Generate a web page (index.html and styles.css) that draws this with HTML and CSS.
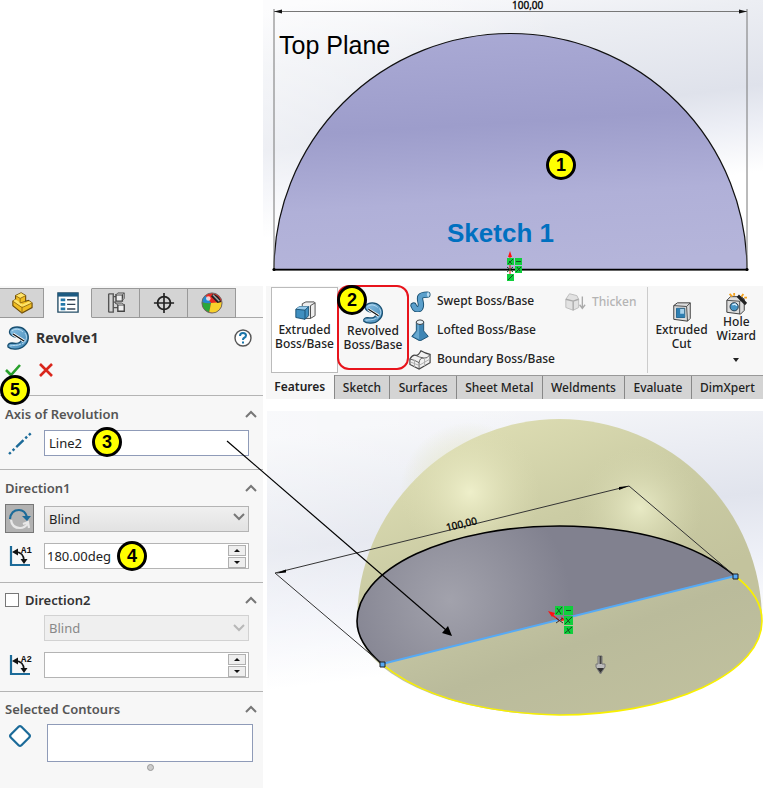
FILE: index.html
```html
<!DOCTYPE html>
<html lang="en">
<head>
<meta charset="utf-8">
<title>Revolve1</title>
<link rel="stylesheet" href="styles.css">
</head>
<body>
<svg class="defs" width="0" height="0" aria-hidden="true">
  <defs>
    <linearGradient id="steel" x1="0" y1="0" x2="1" y2="1"><stop offset="0" stop-color="#8fc4e6"/><stop offset="1" stop-color="#3f86b5"/></linearGradient>
    <symbol id="revolve" viewBox="0 0 24 24">
      <path d="M4 4C7 0 15 0 19 4c5 5 4 12-1 16-4 4-13 4-16 1-1-3 2-4 4-4 5 1 9 0 9-3 0-2-1-3-3-3-5 1-10-3-8-7Z" fill="url(#steel)" stroke="#174e70" stroke-width="1.300"/>
      <path d="M6 5c3-3 8-2 11 1M19 7c3 4 1 9-3 11M4 20c3-1 8 0 11-2" fill="none" stroke="#b9dcf1" stroke-width="1"/>
      <path d="M7 8l11 7" stroke="#fff" stroke-width="3"/><path d="M7 8l11 7" stroke="#111" stroke-width="1.400"/>
    </symbol>
    <symbol id="chevron" viewBox="0 0 12 8"><path d="M1 7l5-5 5 5" fill="none" stroke="#777" stroke-width="2"/></symbol>
    <symbol id="angle" viewBox="0 0 24 24">
      <path d="M3 2v19h19" fill="none" stroke="#1c6b99" stroke-width="2.200"/>
      <path d="M7 8q9 0 9 9" fill="none" stroke="#111" stroke-width="1.600"/>
      <path d="M4 8l6-3.500v7zM16 20l-3.500-5h7z" fill="#111"/>
    </symbol>
  </defs>
</svg>

<main class="page">
  <section class="sketch" aria-label="Sketch">
    <svg viewBox="263 0 500 284" role="img">
      <defs>
        <linearGradient id="sky1" gradientUnits="userSpaceOnUse" x1="480" y1="-20" x2="510" y2="205">
          <stop offset="0" stop-color="#fafafc"/><stop offset=".25" stop-color="#eceef3"/><stop offset=".62" stop-color="#dfe2eb"/><stop offset=".78" stop-color="#eceef5"/><stop offset="1" stop-color="#fff"/>
        </linearGradient>
        <linearGradient id="glow1" x1="0" y1="0" x2="1" y2="0"><stop offset="0" stop-color="#fff" stop-opacity=".45"/><stop offset=".6" stop-color="#fff" stop-opacity="0"/></linearGradient>
        <linearGradient id="disc" gradientUnits="userSpaceOnUse" x1="500" y1="33" x2="515" y2="269">
          <stop offset="0" stop-color="#a9a9d4"/><stop offset=".38" stop-color="#9d9dcb"/><stop offset=".7" stop-color="#b0b0d8"/><stop offset="1" stop-color="#b5b5da"/>
        </linearGradient>
      </defs>
      <path d="M263 0h500v284H263z" fill="url(#sky1)"/>
      <path d="M263 0h500v284H263z" fill="url(#glow1)"/>
      <path d="M274 270A236.500 236.500 0 0 1 747 270Z" fill="url(#disc)" stroke="#111" stroke-width="1.200"/>
      <path d="M274 9v260M747 9v260M274 11.500h473" fill="none" stroke="#777" stroke-width="1"/>
      <path d="M274 11.500l8-2v4zM747 11.500l-8-2v4z" fill="#111"/>
      <path d="M274 269.500h473" stroke="#000" stroke-width="1.400"/><circle cx="274" cy="269.500" r="1.600"/><circle cx="747" cy="269.500" r="1.600"/>
      <text class="dimension" x="512" y="9">100,00</text>
      <text class="plane" x="279" y="54">Top Plane</text>
      <text class="name" x="447" y="242">Sketch 1</text>
      <path d="M510 275v-20" stroke="#e11" stroke-width="1"/><path d="M510 251l2 6h-4zM522 270l-7-2v4z" fill="#f11"/>
      <path d="M507 258h7v7h-7zM515 258h7v7h-7zM515 266h7v7h-7zM507 274h7v7h-7z" fill="#10cf3c"/>
      <path d="M508 264l5-5M509 261l3 3M516 261.500h5M516 272l5-5M517 267l3 4M508 280l5-5M507 267l6 5M507 272l6-5" stroke="#124d20" stroke-width="1"/>
      <circle cx="561" cy="165" r="13.500" fill="#ff0" stroke="#000" stroke-width="3"/>
      <text class="mark" x="561" y="171">1</text>
    </svg>
  </section>

  <aside class="panel">
    <nav class="panel-tabs" aria-label="Manager tabs">
      <button aria-label="Feature tree"><svg viewBox="0 0 24 24"><path d="M2 10l3-2V4l6-3 5 3v6l3-1 4 3v5l-11 6L2 15z" fill="#f0bd22" stroke="#6b4b08" stroke-width="1.200"/><path d="M5 4l5 3 6-3-5-3zM2 10l3-2 8 6-2 2zM12 14l8-4 3 2-10 5z" fill="#ffe468"/><path d="M5 4l5 3v5M10 7l6-3M2 10l10 7 11-5M12 17v6M10 12l6-2" fill="none" stroke="#946a0d"/></svg></button>
      <button class="current" aria-label="Properties"><svg viewBox="0 0 24 24"><path d="M1 1h22v21H1z" fill="#fff" stroke="#254e67" stroke-width="1.500"/><path d="M1 1h22v4H1z" fill="#1d5b82"/><path d="M4 7h5v3H4zM4 12h5v3H4zM4 17h5v3H4z" fill="#2478a9"/><path d="M11 8.500h9M11 13.500h9M11 18.500h9" stroke="#345" stroke-width="1.500"/></svg></button>
      <button aria-label="Configurations"><svg viewBox="0 0 24 24"><path d="M4 2h5v20H4M4 2v20M9 5h6M9 17h6M9 11h3" fill="none" stroke="#555" stroke-width="1.500"/><path d="M12 3h7v7h-7zM14 14h7v7h-7z" fill="#eee" stroke="#444" stroke-width="1.500"/><path d="M12 3l2-2h7l-2 2M21 1v6l-2 2M14 14l-3-2h7l3 2" fill="#bbb" stroke="#555"/></svg></button>
      <button aria-label="DimXpert manager"><svg viewBox="0 0 24 24"><circle cx="12" cy="12" r="7" fill="none" stroke="#222" stroke-width="2"/><path d="M12 1v22M1 12h22" stroke="#222" stroke-width="1.800"/></svg></button>
      <button aria-label="Appearances"><svg viewBox="0 0 24 24"><circle cx="12" cy="12" r="11" fill="#e52a24"/><path d="M1 11q5 2 10 1l-2 10Q1 20 1 11z" fill="#2aa83a"/><path d="M1 11Q1 6 5 4l6 8Q6 13 1 11z" fill="#238ad0"/><path d="M11 12l12-1q0 10-9 12l-5-1z" fill="#f8d12b"/><path d="M13 2q7 2 9 9l-4 1-7-7z" fill="#222"/><path d="M13 3l7 7" stroke="#aaa" stroke-width="1.500"/><circle cx="12" cy="12" r="11" fill="none" stroke="#666"/><circle cx="8" cy="7" r="2.500" fill="#fff" opacity=".75"/></svg></button>
    </nav>
    <header class="title">
      <svg class="feature-icon"><use href="#revolve"/></svg>
      <h1>Revolve1</h1>
      <button class="plain" aria-label="Help"><svg width="18" height="18" viewBox="0 0 18 18"><circle cx="9" cy="9" r="8" fill="#fff" stroke="#555" stroke-width="1.400"/><path d="M6 7q0-3 3-3t3 2.500q0 1.500-2 2.500-1 .5-1 2" fill="none" stroke="#1b76aa" stroke-width="2"/><path d="M8 12.500h2v2H8z" fill="#1b76aa"/></svg></button>
    </header>
    <div class="actions">
      <button class="plain" aria-label="OK"><svg width="18" height="16" viewBox="0 0 18 16"><path d="M2 8l5 5L16 3" fill="none" stroke="#28a02b" stroke-width="2.600"/></svg></button>
      <button class="plain" aria-label="Cancel"><svg width="14" height="14" viewBox="0 0 14 14"><path d="M1 1l12 12M13 1L1 13" stroke="#d9261c" stroke-width="2.600"/></svg></button>
      <span class="badge badge-ok">5</span>
    </div>

    <section class="group">
      <h2><label for="axis">Axis of Revolution</label><svg><use href="#chevron"/></svg></h2>
      <div class="row">
        <svg class="row-icon" viewBox="0 0 24 24"><path d="M1 23L23 2" stroke="#1c6b99" stroke-width="2.400" stroke-dasharray="2.500 2.500 2.500 2.500 10 2.500 2.500 2.500 2.500 2.500"/></svg>
        <input id="axis" class="field picked" value="Line2">
        <span class="badge badge-axis">3</span>
        <svg class="pointer" width="228" height="198" viewBox="0 0 228 198"><path d="M1 1L220 190" stroke="#000" stroke-width="1.200"/><path d="M226 196l-10-3 6-7z"/></svg>
      </div>
    </section>

    <section class="group">
      <h2><label for="type1">Direction1</label><svg><use href="#chevron"/></svg></h2>
      <div class="row">
        <button class="reverse" aria-label="Reverse direction"><svg viewBox="0 0 24 24"><path d="M3 13q1 8 9 8 5 0 8-5M15 17l5-2 1 6" fill="none" stroke="#e8e8e8" stroke-width="2.200"/><path d="M2 12Q3 3 11 3q6 0 8 7" fill="none" stroke="#1c6b99" stroke-width="2.200"/><path d="M14 9h9l-4 5z" fill="#1c6b99"/></svg></button>
        <select id="type1" class="field"><option>Blind</option></select>
        <svg class="arrow"><use href="#chevron"/></svg>
      </div>
      <div class="row">
        <svg class="row-icon" viewBox="0 0 24 24"><use href="#angle"/><text x="13" y="9">A1</text></svg>
        <input class="field tight" aria-label="Direction 1 angle" value="180.00deg">
        <span class="spin"><button aria-label="Increase"></button><button aria-label="Decrease"></button></span>
        <span class="badge badge-angle">4</span>
      </div>
    </section>

    <section class="group compact">
      <h2 class="strong"><input type="checkbox" id="dir2"><label for="dir2">Direction2</label><svg><use href="#chevron"/></svg></h2>
      <div class="row">
        <span></span>
        <select class="field" aria-label="Direction 2 type" disabled><option>Blind</option></select>
        <svg class="arrow faded"><use href="#chevron"/></svg>
      </div>
      <div class="row">
        <svg class="row-icon" viewBox="0 0 24 24"><use href="#angle"/><text x="13" y="9">A2</text></svg>
        <input class="field tight" aria-label="Direction 2 angle">
        <span class="spin"><button aria-label="Increase"></button><button aria-label="Decrease"></button></span>
      </div>
    </section>

    <section class="group compact">
      <h2><label for="contours">Selected Contours</label><svg><use href="#chevron"/></svg></h2>
      <div class="row contours">
        <svg class="row-icon" viewBox="0 0 24 24"><rect x="4.500" y="4.500" width="15" height="15" rx="2" transform="rotate(45 12 12)" fill="#fff" stroke="#1c6b99" stroke-width="2.200"/></svg>
        <textarea id="contours" class="field picked"></textarea>
      </div>
      <div class="grip"></div>
    </section>
  </aside>

  <div class="work">
    <section class="ribbon">
      <div class="tools">
        <button class="tool boxed"><svg viewBox="0 0 24 24"><path d="M9 3l4-2h9l1 1v14l-5 3H9z" fill="#eee" stroke="#444"/><path d="M18 5l5-3M18 5v14" stroke="#444"/><path d="M2 9l4-3h10v10l-4 4-10-2z" fill="#3f8fc0" stroke="#174e70"/><path d="M2 9l4-3h10l-4 4z" fill="#9bcbea"/><path d="M2 9l10 1v10M12 10l4-4" fill="none" stroke="#174e70"/></svg><span>Extruded<br>Boss/Base</span></button>
        <button class="tool chosen"><svg><use href="#revolve"/></svg><span>Revolved<br>Boss/Base</span><b class="badge badge-tool">2</b></button>
        <div class="list">
          <button><svg viewBox="0 0 24 24"><path d="M5 17c2 6 8 5 8-1 0-5-5-11 7-11" fill="none" stroke="#174e70" stroke-width="7" stroke-linecap="round"/><path d="M5 17c2 6 8 5 8-1 0-5-5-11 7-11" fill="none" stroke="#5b9fcb" stroke-width="5" stroke-linecap="round"/><ellipse cx="21" cy="5" rx="1.500" ry="2.500" fill="#b9dcf1"/></svg>Swept Boss/Base</button>
          <button><svg viewBox="0 0 24 24"><path d="M8 3v10L3 19l9 5 9-5-5-6V3z" fill="#3f86b5" stroke="#174e70"/><path d="M9 5v8l-4 6 6 3V5z" fill="#68a9d0"/><ellipse cx="12" cy="3.500" rx="4" ry="2.500" fill="#e4f0f7" stroke="#333"/></svg>Lofted Boss/Base</button>
          <button><svg viewBox="0 0 24 24"><path d="M1 12q3-5 6-4t6-5q5 3 10 4v9l-12 7-10-5z" fill="#f1f1f1" stroke="#444" stroke-width="1.300"/><path d="M1 12q5 1 10 4 1-6 5-5t7-4M11 16v7M7 8q4 2 9 3" fill="none" stroke="#555"/><path d="M1 15l10 4 12-7M6 13v8M17 11v9" fill="none" stroke="#aaa"/></svg>Boundary Boss/Base</button>
        </div>
        <button class="thicken" disabled><svg viewBox="0 0 24 24"><path d="M2 9l4-6 8 2 2 4v9l-6 3-8-3z" fill="#e2e2e2" stroke="#bbb"/><path d="M2 9l8 2 6-2M10 11v10M20 6v12M17 15l3 4 3-4" fill="none" stroke="#aaa" stroke-width="1.500"/></svg>Thicken</button>
        <button class="tool cut"><svg viewBox="0 0 24 24"><path d="M3 5l4-3h14v17l-3 3-15-2z" fill="#ddd" stroke="#333"/><path d="M3 5l14 1 4-4M17 6l1 16" fill="none" stroke="#444"/><path d="M6 8h9v10H6z" fill="#a8d2ec" stroke="#174e70"/><path d="M6 18V8h4v6h5v4z" fill="#2f7fb2"/></svg><span>Extruded<br>Cut</span></button>
        <button class="tool hole"><svg viewBox="0 0 24 24"><path d="M2 8l4-4h12l3 3v12l-4 4-15-2z" fill="#ddd" stroke="#333"/><path d="M2 8l14 1v14M16 9l5-3" fill="none" stroke="#444"/><circle cx="10" cy="15" r="4.500" fill="#4695c6" stroke="#234"/><path d="M8 13l3-1 2 2" fill="none" stroke="#d7efff" stroke-width="1.500"/><path d="M14 3l9 9" stroke="#222" stroke-width="3.500"/><path d="M5 1l3 3M10 0v3M20 1l-2 3M21 5h3" stroke="#f3a11c" stroke-width="2"/></svg><span>Hole<br>Wizard</span><i></i></button>
      </div>
      <nav class="ribbon-tabs" aria-label="Ribbon tabs">
        <button class="current">Features</button><button>Sketch</button><button>Surfaces</button><button>Sheet Metal</button><button>Weldments</button><button>Evaluate</button><button>DimXpert</button>
      </nav>
    </section>

    <section class="model" aria-label="Model preview">
      <svg viewBox="267 411 496 312" role="img">
        <defs>
          <linearGradient id="sky2" gradientUnits="userSpaceOnUse" x1="490" y1="411" x2="520" y2="660"><stop offset="0" stop-color="#f5f6f9"/><stop offset=".45" stop-color="#e1e4ed"/><stop offset=".72" stop-color="#eff1f8"/><stop offset="1" stop-color="#fff"/></linearGradient>
          <linearGradient id="glow2" x1="0" y1="0" x2="1" y2="0"><stop offset="0" stop-color="#fff" stop-opacity=".3"/><stop offset=".6" stop-color="#fff" stop-opacity="0"/></linearGradient>
          <linearGradient id="dome" gradientUnits="userSpaceOnUse" x1="510" y1="419" x2="590" y2="620"><stop offset="0" stop-color="#dcdcb2"/><stop offset=".5" stop-color="#cbcca4"/><stop offset="1" stop-color="#c3c39d"/></linearGradient>
          <radialGradient id="shineA" gradientUnits="userSpaceOnUse" cx="470" cy="492" r="70"><stop offset="0" stop-color="#eeefca"/><stop offset="1" stop-color="#dcdcb2" stop-opacity="0"/></radialGradient>
          <radialGradient id="shineB" gradientUnits="userSpaceOnUse" cx="640" cy="508" r="62"><stop offset="0" stop-color="#e8eac5"/><stop offset="1" stop-color="#d4d5ad" stop-opacity="0"/></radialGradient>
          <radialGradient id="face" gradientUnits="userSpaceOnUse" cx="450" cy="600" r="120"><stop offset="0" stop-color="#a2a2ac"/><stop offset=".55" stop-color="#90909c"/><stop offset="1" stop-color="#81818f"/></radialGradient>
          <linearGradient id="base" x1="0" y1="0" x2="1" y2="1"><stop offset="0" stop-color="#cecfaa"/><stop offset=".5" stop-color="#babb9b"/><stop offset="1" stop-color="#c2c29f"/></linearGradient>
        </defs>
        <path d="M267 411h496v312H267z" fill="url(#sky2)"/><path d="M267 411h496v312H267z" fill="url(#glow2)"/>
        <path d="M357 621A202.500 202 0 0 1 762 621A202.500 94 0 0 1 357 621Z" fill="url(#dome)"/>
        <circle cx="470" cy="492" r="70" fill="url(#shineA)"/>
        <circle cx="640" cy="508" r="62" fill="url(#shineB)"/>
        <path d="M735 576Q762 596 762 621A202.500 94 0 0 1 559.500 715Q440 712 382 664Z" fill="url(#base)"/>
        <path d="M382 664Q357 643 357 621A202.500 95 0 0 1 559.500 526Q676 527 735 576Z" fill="url(#face)"/>
        <path d="M735 576Q762 596 762 621A202.500 94 0 0 1 559.500 715Q440 712 382 664" fill="none" stroke="#f8f000" stroke-width="1.600"/>
        <path d="M382 664Q357 643 357 621A202.500 95 0 0 1 559.500 526Q676 527 735 576" fill="none" stroke="#000" stroke-width="1.600"/>
        <path d="M382 664L735 576" stroke="#56aaf5" stroke-width="2"/>
        <path d="M382 664L275 573L629 486L735 576" fill="none" stroke="#333" stroke-width="1"/>
        <path d="M276 573.500l10-4v3zM629 486l-10 1v3z"/>
        <text class="dimension" transform="translate(447 531) rotate(-13)">100,00</text>
        <path d="M380 662h5v5h-5zM733 574h5v5h-5z" fill="#56aaf5" stroke="#222" stroke-width="1"/>
        <path d="M560 621l-9-7" stroke="#f11" stroke-width="1.500"/><path d="M548 611l7 2-3 4zM567 620l-6-3v4z" fill="#f11"/><path d="M556 618l7 5M556 623l7-5" stroke="#333"/>
        <path d="M555 606h8v9h-8zM564 606h9v9h-9zM564 616h9v9h-9zM564 626h9v8h-9z" fill="#10cf3c"/>
        <path d="M556 614l6-7M557 608l4 6M566 610.500h5M565 624l7-7M566 618l4 5M565 633l7-6M567 628l3 5" stroke="#124d20" stroke-width="1"/>
        <path d="M598 656h4v8h3v3l-4.500 7-4.500-7v-3h2z" fill="#bbb" stroke="#777"/><path d="M600.500 656v8" stroke="#444" stroke-width="2"/><path d="M597 668h7l-3.500 5z" fill="#333"/>
      </svg>
    </section>
  </div>
</main>
</body>
</html>
```
FILE: styles.css
```css
* { box-sizing: border-box; }
body { margin: 0; background: #fff; color: #222; font: 12px/14px "Noto Sans", "Open Sans", sans-serif; }
button, input, select, textarea { font: inherit; color: inherit; margin: 0; }
button { padding: 0; border: 0; background: none; }
svg { display: block; }
.defs { position: absolute; }

.page { display: grid; grid-template-columns: 263px minmax(0, 1fr); grid-template-rows: auto 1fr; row-gap: 2px; min-height: 100vh; }
.sketch { grid-column: 2; }
.sketch svg, .model svg { width: 100%; height: auto; }
.plane { font: 25px "Liberation Sans", sans-serif; fill: #000; }
.name { font: bold 26px "Liberation Sans", sans-serif; fill: #0070c0; }
.mark { font: bold 18px "Liberation Sans", sans-serif; text-anchor: middle; }
.dimension { font: 10px "Noto Sans", sans-serif; fill: #000; stroke: #000; stroke-width: .3px; }

.badge { position: absolute; z-index: 2; width: 30px; height: 30px; border: 3px solid #000; border-radius: 50%; background: #ff0; color: #000; font: bold 18px/24px "Liberation Sans", sans-serif; text-align: center; }

/* property panel */
.panel { background: #f7f7f7; padding-top: 2px; }
.panel-tabs { display: flex; height: 30px; padding-right: 27px; border-bottom: 1px solid #aaa; }
.panel-tabs button { flex: 12; display: grid; place-items: center; background: #d4d4d4; border: 1px solid #999; border-left: 0; margin-bottom: -1px; }
.panel-tabs button:first-child { flex-grow: 11; }
.panel-tabs .current { background: #f7f7f7; border-color: #f7f7f7 #999 #f7f7f7 #f7f7f7; }
.panel-tabs svg { width: 22px; height: 22px; }
.title { display: flex; align-items: center; height: 40px; padding: 0 11px 0 6px; gap: 6px; }
.title h1 { flex: 1; margin: 0; font-size: 14px; font-weight: 700; line-height: 20px; color: #333; }
.feature-icon { width: 24px; height: 24px; }
.actions { position: relative; display: flex; align-items: center; gap: 17px; height: 37px; padding: 0 4px 13px; }
.badge-ok { left: 0; top: 17px; }

.group { border-top: 1px solid #b4b4b4; padding: 0 14px 13px 5px; font-size: 13px; line-height: 16px; }
.group h2 { display: flex; align-items: center; height: 34px; margin: 0; padding-top: 1px; font-size: 13px; font-weight: 600; color: #555; }
.group h2 label { flex: 1; }
.group h2 svg { width: 12px; height: 8px; margin-right: -8px; }
.group .strong { color: #333; gap: 6px; }
.group input[type=checkbox] { appearance: none; width: 14px; height: 14px; border: 1px solid #777; background: #fff; }
.row { position: relative; display: grid; grid-template-columns: 29px minmax(0, 1fr); column-gap: 10px; align-items: center; height: 26px; }
.row + .row { margin-top: 13px; }
.compact h2 { height: 32px; }
.compact .row + .row { margin-top: 11px; }
.row-icon { width: 24px; height: 24px; margin-left: 3px; overflow: visible; }
.row-icon text { font: bold 9px "Liberation Mono", monospace; fill: #111; }
.field { width: 100%; height: 26px; padding: 0 4px; border: 1px solid #b4b4b4; border-radius: 0; background: #fff; outline: 0; appearance: none; resize: none; }
.tight { padding: 0 2px; }
.picked { border-color: #8f9bb8; }
select.field { background: linear-gradient(#f0f0f0, #e2e2e2); }
select.field:disabled { background: #efefef; border-color: #d2d2d2; color: #888; opacity: 1; }
.arrow { position: absolute; right: 4px; width: 12px; height: 8px; transform: rotate(180deg); pointer-events: none; }
.faded { opacity: .45; }
.reverse { width: 29px; height: 29px; display: grid; place-items: center; background: #b2b2b2; border: 1px solid #777; }
.reverse svg { width: 24px; height: 24px; }
.spin { position: absolute; right: 3px; top: 2px; display: grid; gap: 1px; width: 18px; }
.spin button { height: 11px; display: grid; place-items: center; border: 1px solid #b0b0b0; background: #eee; }
.spin button::before { content: ""; border: 3px solid transparent; border-top: 0; border-bottom-color: #111; }
.spin button:last-child::before { transform: rotate(180deg); }
.badge-axis { left: 87px; top: -3px; }
.badge-angle { left: 112px; top: -2px; }
.pointer { position: absolute; z-index: 3; left: 221px; top: 10px; }
.contours { height: 38px; align-items: start; column-gap: 13px; margin-right: -4px; }
.contours .field { height: 38px; }
.grip { width: 7px; height: 7px; margin: 2px auto 0 142px; border: 1px solid #999; border-radius: 50%; background: #ccc; }

/* ribbon */
.work { min-width: 0; padding-left: 3px; }
.ribbon { background: #f7f7f7; color: #222; }
.ribbon button { font-weight: 500; white-space: nowrap; }
.tools { display: flex; height: 89px; padding: 1px 0 2px 5px; }
.tool { position: relative; display: flex; flex-direction: column; align-items: center; padding-top: 14px; line-height: 14px; }
.tool svg { width: 22px; height: 22px; }
.boxed { width: 67px; background: #fff; border: 1px solid #bbb; padding-top: 13px; }
.chosen { width: 72px; margin: -2px 0 0 -1px; height: 85px; padding-top: 15px; border: 2px solid #e8141c; border-radius: 12px; }
.badge-tool { left: -2px; top: -2px; }
.list { display: flex; flex-direction: column; }
.list button, .thicken { display: flex; align-items: center; gap: 6px; height: 29px; text-align: left; }
.list svg, .thicken svg { width: 22px; height: 22px; }
.thicken { margin-left: 9px; color: #b4b4b4; }
.cut { margin-left: auto; padding-left: 7px; border-left: 1px solid #ccc; }
.hole { padding: 6px 7px 0 9px; }
.hole i { margin-top: 15px; border: 3px solid transparent; border-top: 4px solid #222; border-bottom: 0; }
.ribbon-tabs { display: flex; height: 24px; background: #d4d4d4; border-top: 1px solid #999; }
.ribbon-tabs button { flex: auto; border-right: 1px solid #888; }
.ribbon-tabs button:last-child { border-right: 0; }
.ribbon-tabs .current { background: #f7f7f7; font-weight: 600; margin-top: -1px; }

.model { padding: 12px 0 0 1px; }
```
